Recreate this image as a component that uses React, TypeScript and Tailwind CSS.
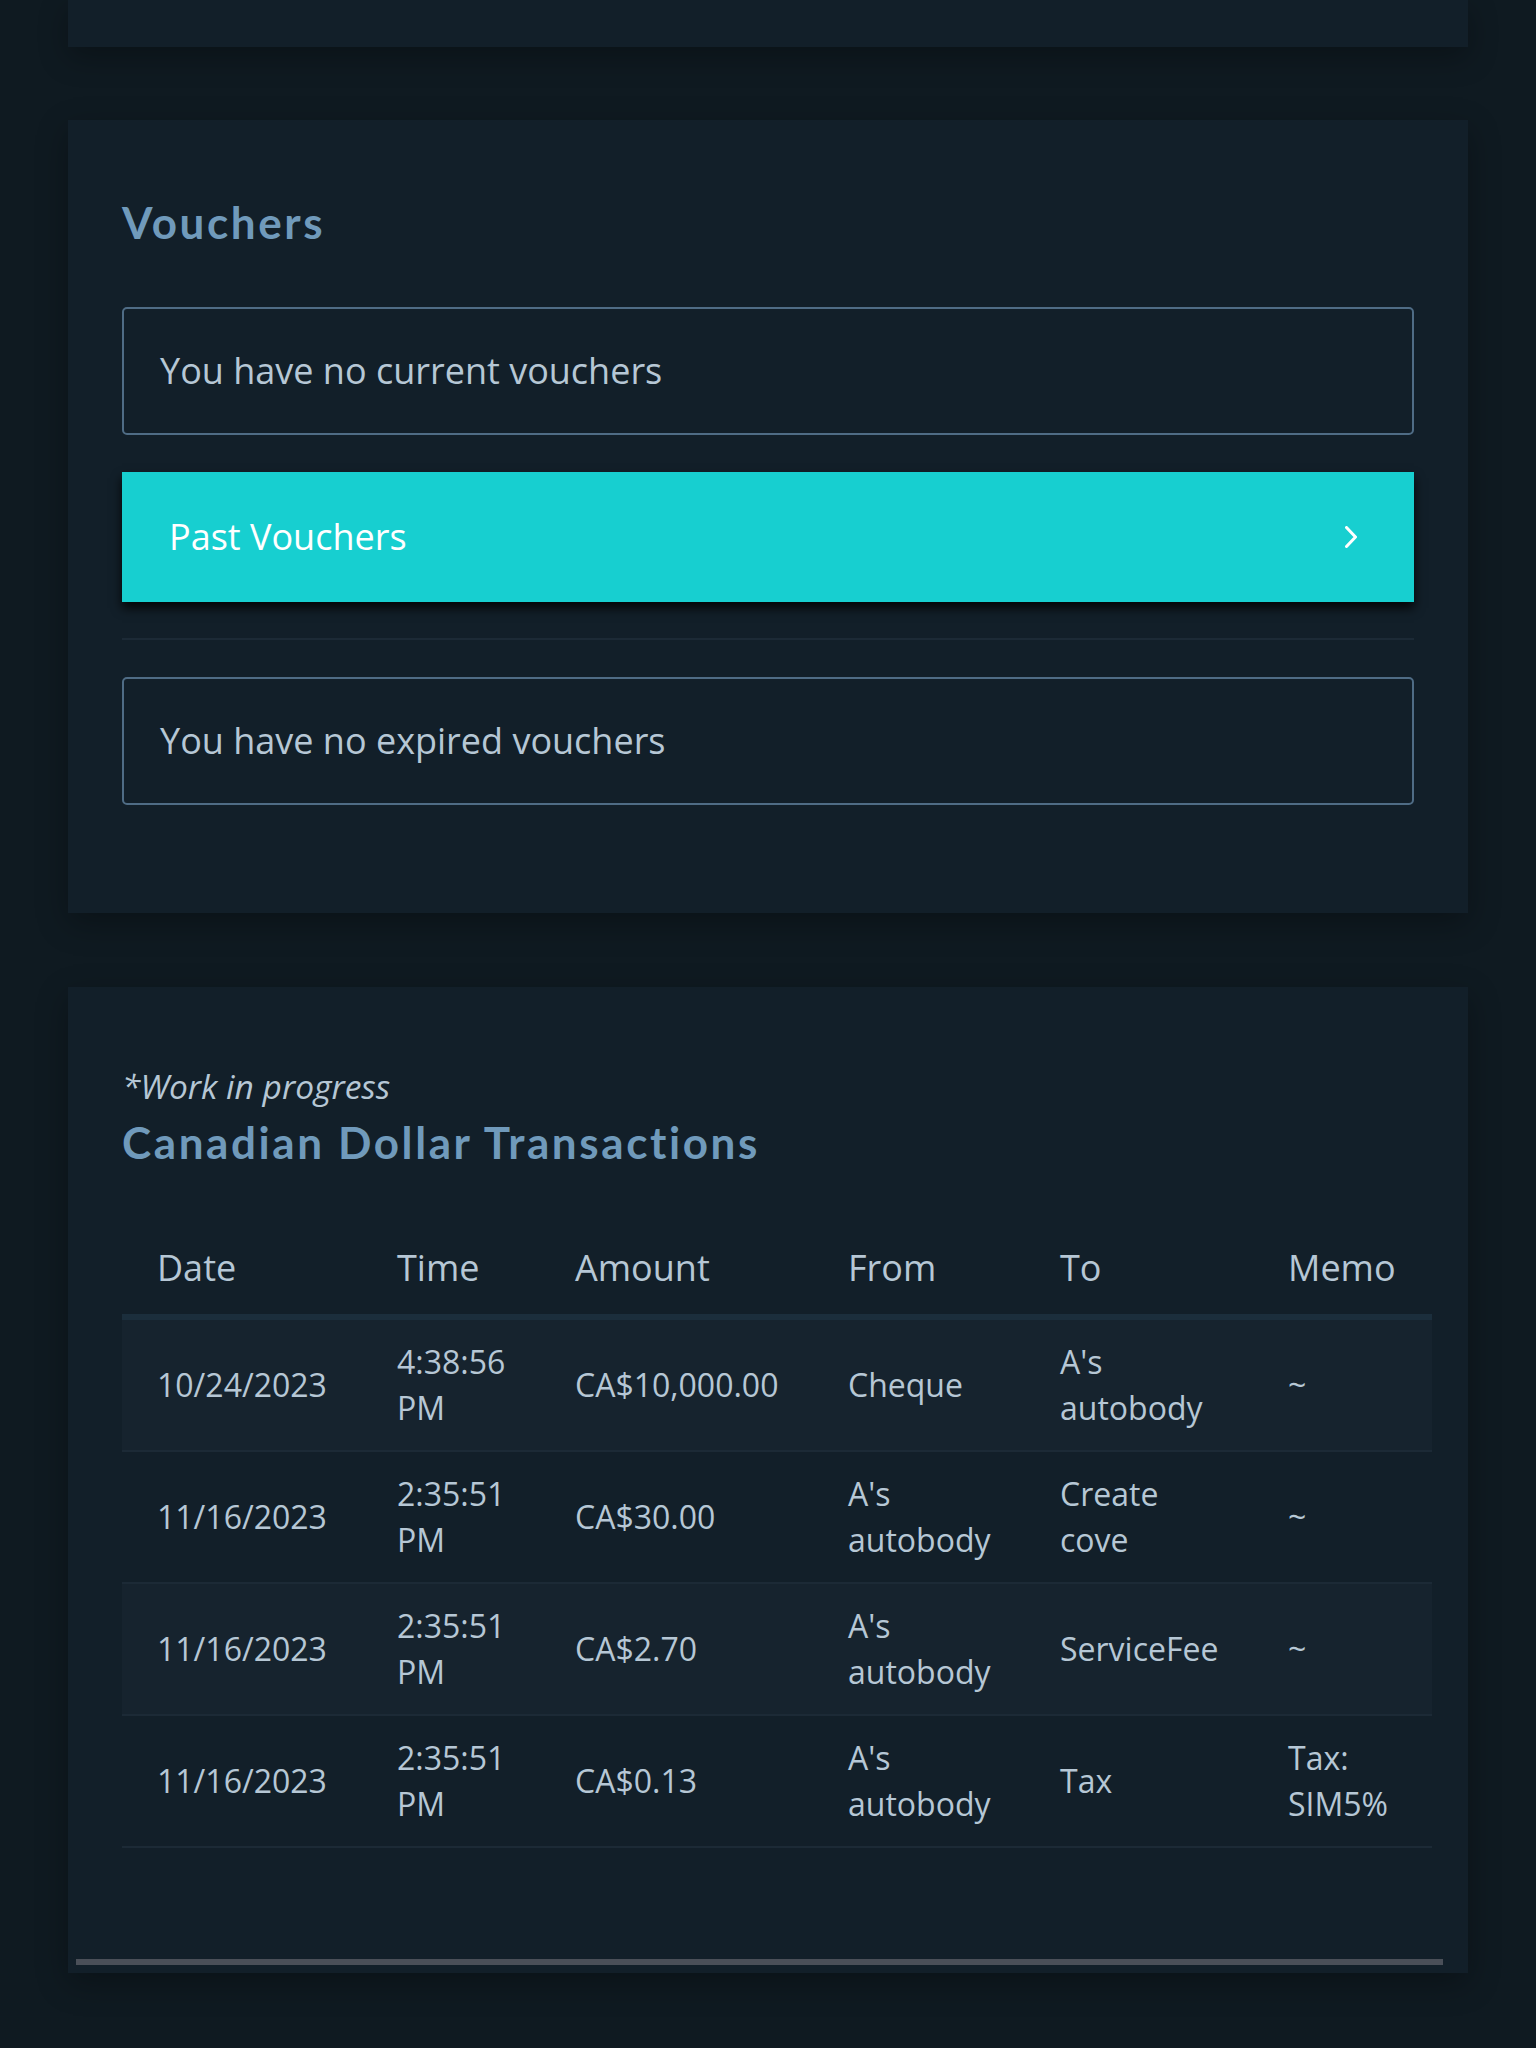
const body = { fontFamily: '"Open Sans", "Noto Sans", sans-serif' }
const head = { fontFamily: 'Lato, "Open Sans", sans-serif' }

type Row = { date: string; time: string[]; amount: string; from: string[]; to: string[]; memo: string[] }

const rows: Row[] = [
  { date: '10/24/2023', time: ['4:38:56', 'PM'], amount: 'CA$10,000.00', from: ['Cheque'], to: ["A's", 'autobody'], memo: ['~'] },
  { date: '11/16/2023', time: ['2:35:51', 'PM'], amount: 'CA$30.00', from: ["A's", 'autobody'], to: ['Create', 'cove'], memo: ['~'] },
  { date: '11/16/2023', time: ['2:35:51', 'PM'], amount: 'CA$2.70', from: ["A's", 'autobody'], to: ['ServiceFee'], memo: ['~'] },
  { date: '11/16/2023', time: ['2:35:51', 'PM'], amount: 'CA$0.13', from: ["A's", 'autobody'], to: ['Tax'], memo: ['Tax:', 'SIM5%'] },
]

const cols = 'grid grid-cols-[240px_178px_273px_212px_228px_179px]'

function Lines({ lines }: { lines: string[] }) {
  return (
    <div className="pl-[35px] flex flex-col justify-center">
      {lines.map((l, i) => (
        <span key={i} className="whitespace-nowrap">{l}</span>
      ))}
    </div>
  )
}

function EmptyBox({ text }: { text: string }) {
  return (
    <div className="h-[128px] border-2 border-[#4f6c85] rounded-[5px] flex items-center px-[36px]">
      <span className="text-[36px] leading-[1.5] text-[#b6c7d5]" style={body}>{text}</span>
    </div>
  )
}

export default function App() {
  return (
    <div className="min-h-[2048px] bg-[#0f1a21] px-[68px]">
      <div className="h-[47px] bg-[#121f29] shadow-[0_10px_30px_rgba(0,0,0,0.3)]" />

      <div className="mt-[73px] bg-[#121f29] px-[54px] pt-[76px] pb-[108px] shadow-[0_10px_30px_rgba(0,0,0,0.3)]">
        <h2 className="text-[44px] leading-[1.2] font-bold tracking-[2.6px] text-[#709abb]" style={head}>Vouchers</h2>
        <div className="mt-[58px]">
          <EmptyBox text="You have no current vouchers" />
        </div>
        <button className="mt-[37px] w-full h-[130px] bg-[#17cfd0] flex items-center justify-between pl-[47px] pr-[57px] shadow-[0_6px_10px_rgba(0,0,0,0.85)]">
          <span className="text-[36px] leading-[1.5] text-white" style={body}>Past Vouchers</span>
          <svg width="12" height="22" viewBox="0 0 12 22" fill="none">
            <polyline points="1.5,1.5 10.5,11 1.5,20.5" stroke="white" strokeWidth="3" strokeLinecap="round" strokeLinejoin="round" />
          </svg>
        </button>
        <div className="mt-[36px] h-[2px] bg-[#1c2a36]" />
        <div className="mt-[37px]">
          <EmptyBox text="You have no expired vouchers" />
        </div>
      </div>

      <div className="mt-[74px] bg-[#121f29] pt-[75px] pb-[8px] shadow-[0_10px_30px_rgba(0,0,0,0.3)]">
        <div className="px-[54px]">
          <p className="text-[33.5px] leading-[48px] italic text-[#b6c7d5]" style={body}>*Work in progress</p>
          <h2 className="mt-[6px] text-[44px] leading-[1.2] font-bold tracking-[2.6px] text-[#709abb]" style={head}>Canadian Dollar Transactions</h2>

          <div className="mt-[53px] w-[1310px] text-[#b6c7d5]" style={body}>
            <div className={`${cols} py-[19px] text-[36px] leading-[54px] border-b-[6px] border-[#1b2e3c]`}>
              {['Date', 'Time', 'Amount', 'From', 'To', 'Memo'].map(h => (
                <div key={h} className="pl-[35px]">{h}</div>
              ))}
            </div>
            {rows.map((r, i) => (
              <div
                key={i}
                className={`${cols} h-[132px] text-[32px] leading-[46px] border-b-2 border-[#1c2a36] ${i % 2 === 0 ? 'bg-[#16232e]' : ''}`}
              >
                <Lines lines={[r.date]} />
                <Lines lines={r.time} />
                <Lines lines={[r.amount]} />
                <Lines lines={r.from} />
                <Lines lines={r.to} />
                <Lines lines={r.memo} />
              </div>
            ))}
          </div>
        </div>

        <div className="mt-[111px] ml-[8px] w-[1367px] h-[6px] bg-[#4a4f58]" />
      </div>
    </div>
  )
}
